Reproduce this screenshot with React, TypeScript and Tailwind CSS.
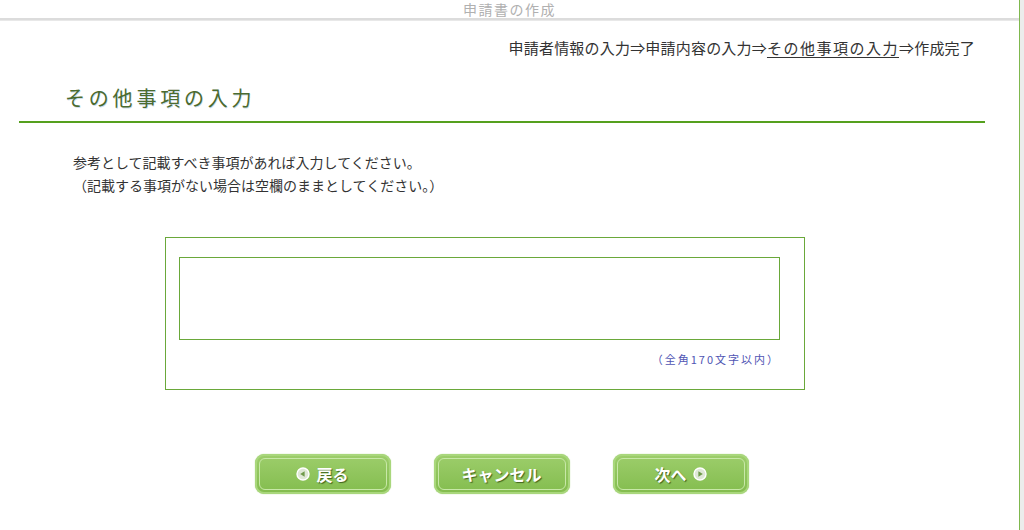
import React from 'react';

const font = { fontFamily: '"Noto Sans CJK JP", "Noto Sans", sans-serif' };

function ArrowCircle({ dir }: { dir: 'left' | 'right' }) {
  return (
    <svg width="14" height="14" viewBox="0 0 14 14" className="shrink-0">
      <circle cx="7" cy="7" r="6" fill="#dfe8d6" stroke="#ffffff" strokeWidth="1.4" />
      {dir === 'left'
        ? <path d="M4.2 7 L8.6 4.2 L8.6 9.8 Z" fill="#6f9a4a" />
        : <path d="M9.8 7 L5.4 4.2 L5.4 9.8 Z" fill="#6f9a4a" />}
    </svg>
  );
}

function GreenButton({ children }: { children: React.ReactNode }) {
  return (
    <button className="w-[136px] h-[40px] rounded-[9px] p-[2px] bg-[#a9d77c] shadow-[0_0_1px_#8fc65e]">
      <div className="w-full h-full rounded-[7px] bg-gradient-to-b from-[#9ccd6a] to-[#84bd4f] p-[2px]">
        <div className="w-full h-full rounded-[6px] border border-[#c8e8a8] flex items-center justify-center gap-1.5 text-white font-bold text-[16px] [text-shadow:1px_1px_1px_rgba(40,70,10,0.75)]">
          {children}
        </div>
      </div>
    </button>
  );
}

export default function App() {
  return (
    <div className="w-[1024px] h-[530px] bg-[#ececec] overflow-hidden" style={font}>
      <div className="w-[1020px] h-full bg-white border-r border-[#7fb84e]">

        {/* ── タイトル ── */}
        <div className="h-[18px] flex items-center justify-center text-[14px] leading-none tracking-[1.5px] text-[#b0b0b0]">
          申請書の作成
        </div>
        <div className="h-[3px] bg-[#dcdcdc] border-b border-[#e8e8e8]" />

        {/* ── パンくず ── */}
        <div className="flex justify-end pr-[44px] mt-[17px] text-[15px] leading-[20px] text-[#333] tracking-[0.2px]">
          <span>申請者情報の入力⇒申請内容の入力⇒</span>
          <span className="underline underline-offset-[3px] tracking-[1.5px]">その他事項の入力</span>
          <span>⇒作成完了</span>
        </div>

        {/* ── 見出し ── */}
        <div className="ml-[19px] mr-[34px] mt-[26px] border-b-2 border-[#55a01e] pb-[9px]">
          <h1 className="ml-[46px] text-[20px] leading-[28px] tracking-[3.8px] text-[#4b6b30] [text-shadow:0.5px_0.5px_0_rgba(120,160,200,0.35)]">
            その他事項の入力
          </h1>
        </div>

        {/* ── 説明 ── */}
        <div className="ml-[73px] mt-[28px] text-[14px] leading-[23px] text-[#333]">
          <p>参考として記載すべき事項があれば入力してください。</p>
          <p>（記載する事項がない場合は空欄のままとしてください。）</p>
        </div>

        {/* ── 入力欄 ── */}
        <div className="ml-[165px] mt-[40px] w-[640px] h-[153px] border border-[#6aa83a] pt-[19px] pl-[13px]">
          <div className="w-[601px] h-[83px] border border-[#6aa83a] bg-white">
            <textarea className="block w-full h-full border-0 resize-none outline-none bg-transparent" />
          </div>
          <div className="w-[601px] text-right mt-[12px] text-[11px] leading-[14px] tracking-[2px] text-[#5055b4]">
            （全角170文字以内）
          </div>
        </div>

        {/* ── ボタン ── */}
        <div className="flex justify-center gap-[43px] mt-[64px] pr-[16px]">
          <GreenButton><ArrowCircle dir="left" />戻る</GreenButton>
          <GreenButton>キャンセル</GreenButton>
          <GreenButton>次へ<ArrowCircle dir="right" /></GreenButton>
        </div>
      </div>
    </div>
  );
}
